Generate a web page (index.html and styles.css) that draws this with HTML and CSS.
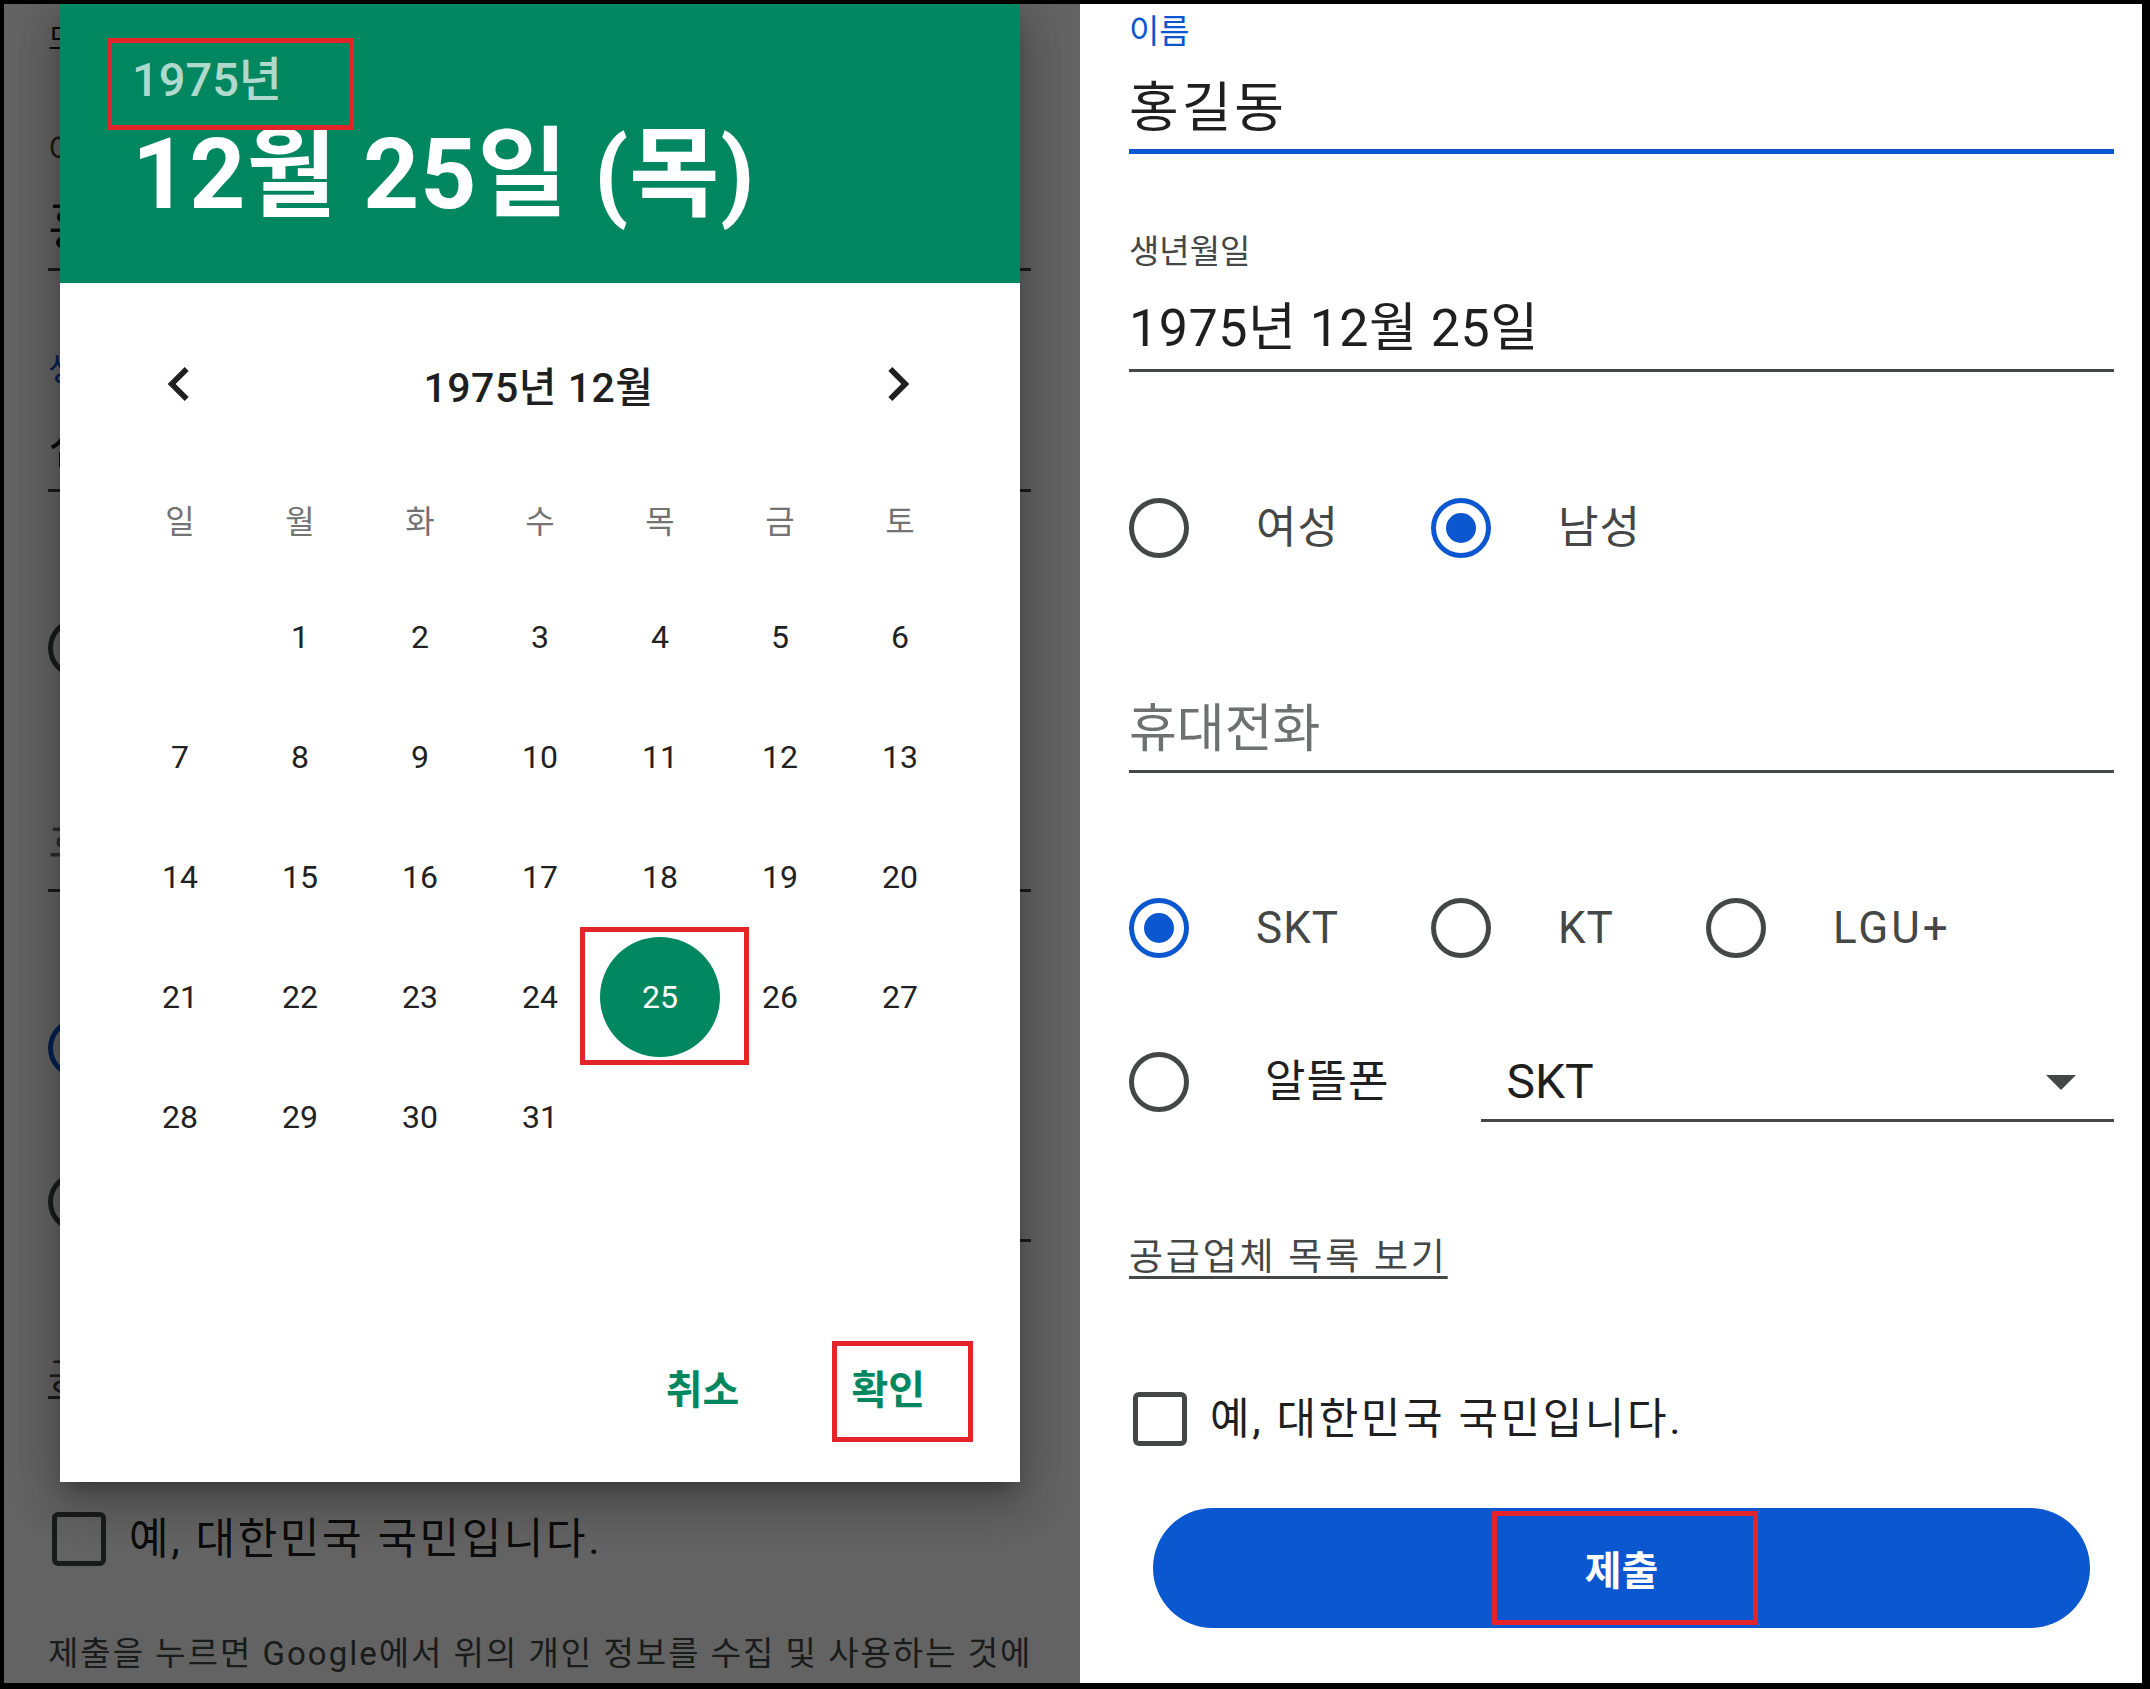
FILE: index.html
```html
<!DOCTYPE html>
<html lang="ko">
<head>
<meta charset="utf-8">
<title>날짜 선택</title>
<link rel="stylesheet" href="styles.css">
</head>
<body>
<div class="frame">
  <section class="panel panel-left">
    <div class="form">
      <p class="intro">모든 항목을 입력해 주세요.</p>
      <div class="field">
        <div class="field-label">이름</div>
        <div class="field-value name-value">홍길동</div>
      </div>
      <div class="field f-date active-label">
        <div class="field-label">생년월일</div>
        <div class="field-value">선택하세요</div>
      </div>
      <div class="radio-row row-gender">
        <div class="opt"><span class="radio"></span><span class="opt-label">여성</span></div>
        <div class="opt"><span class="radio on"></span><span class="opt-label">남성</span></div>
      </div>
      <div class="field no-label f-phone">
        <div class="field-value placeholder">휴대전화</div>
      </div>
      <div class="radio-row row-carrier">
        <div class="opt"><span class="radio on"></span><span class="opt-label">SKT</span></div>
        <div class="opt"><span class="radio"></span><span class="opt-label">KT</span></div>
        <div class="opt"><span class="radio"></span><span class="opt-label lgu">LGU+</span></div>
      </div>
      <div class="row-mvno">
        <span class="radio"></span><span class="opt-label">알뜰폰</span>
        <div class="select"><span class="select-value">SKT</span><span class="caret"></span></div>
      </div>
      <a class="link">공급업체 목록 보기</a>
      <div class="check-row"><span class="checkbox"></span><span class="check-label">예, 대한민국 국민입니다.</span></div>
      <p class="disclaimer">제출을 누르면 Google에서 위의 개인 정보를 수집 및 사용하는 것에</p>
    </div>

    <div class="scrim"></div>

    <div class="dialog">
      <div class="dlg-head">
        <div class="dlg-year">1975년</div>
        <div class="dlg-date">12월 25일 (목)</div>
      </div>
      <div class="cal-nav">
        <svg class="chev" viewBox="0 0 24 24"><path d="M15.41 7.41L14 6l-6 6 6 6 1.41-1.41L10.83 12z"/></svg>
        <span class="cal-title">1975년 12월</span>
        <svg class="chev" viewBox="0 0 24 24"><path d="M10 6L8.59 7.41 13.17 12l-4.58 4.59L10 18l6-6z"/></svg>
      </div>
      <div class="cal-week">
        <span class="wd">일</span><span class="wd">월</span><span class="wd">화</span><span class="wd">수</span><span class="wd">목</span><span class="wd">금</span><span class="wd">토</span>
      </div>
      <div class="cal-days">
        <span class="day"></span><span class="day">1</span><span class="day">2</span><span class="day">3</span><span class="day">4</span><span class="day">5</span><span class="day">6</span>
        <span class="day">7</span><span class="day">8</span><span class="day">9</span><span class="day">10</span><span class="day">11</span><span class="day">12</span><span class="day">13</span>
        <span class="day">14</span><span class="day">15</span><span class="day">16</span><span class="day">17</span><span class="day">18</span><span class="day">19</span><span class="day">20</span>
        <span class="day">21</span><span class="day">22</span><span class="day">23</span><span class="day">24</span><span class="day sel">25</span><span class="day">26</span><span class="day">27</span>
        <span class="day">28</span><span class="day">29</span><span class="day">30</span><span class="day">31</span>
      </div>
      <div class="dlg-actions">
        <span class="dlg-btn">취소</span>
        <span class="dlg-btn">확인</span>
      </div>
      <span class="mark mark-year"></span>
      <span class="mark mark-day"></span>
      <span class="mark mark-ok"></span>
    </div>
  </section>

  <section class="panel panel-right">
    <div class="form">
      <div class="field focused">
        <div class="field-label">이름</div>
        <div class="field-value name-value">홍길동</div>
      </div>
      <div class="field f-date">
        <div class="field-label">생년월일</div>
        <div class="field-value date-value">1975년 12월 25일</div>
      </div>
      <div class="radio-row row-gender">
        <div class="opt"><span class="radio"></span><span class="opt-label">여성</span></div>
        <div class="opt"><span class="radio on"></span><span class="opt-label">남성</span></div>
      </div>
      <div class="field no-label f-phone">
        <div class="field-value placeholder">휴대전화</div>
      </div>
      <div class="radio-row row-carrier">
        <div class="opt"><span class="radio on"></span><span class="opt-label">SKT</span></div>
        <div class="opt"><span class="radio"></span><span class="opt-label">KT</span></div>
        <div class="opt"><span class="radio"></span><span class="opt-label lgu">LGU+</span></div>
      </div>
      <div class="row-mvno">
        <span class="radio"></span><span class="opt-label">알뜰폰</span>
        <div class="select"><span class="select-value">SKT</span><span class="caret"></span></div>
      </div>
      <a class="link">공급업체 목록 보기</a>
      <div class="check-row"><span class="checkbox"></span><span class="check-label">예, 대한민국 국민입니다.</span></div>
      <div class="submit">제출</div>
    </div>
    <span class="mark mark-submit"></span>
  </section>
</div>
</body>
</html>
```

FILE: styles.css
```css
* { box-sizing: border-box; }
html, body { margin: 0; padding: 0; }
body {
  background: #000;
  font-family: Roboto, "Noto Sans CJK KR", sans-serif;
  color: #1f1f1f;
}
p { margin: 0; }

.frame {
  width: 2150px;
  height: 1689px;
  padding: 4px 8px 6px 4px;
  display: flex;
}
.panel {
  position: relative;
  height: 1679px;
  overflow: hidden;
  background: #fff;
  flex: none;
}
.panel-left { width: 1076px; padding: 15px 49px 0 44px; }
.panel-right { width: 1062px; padding: 7.5px 28px 0 49px; }

.form { display: flex; flex-direction: column; }

.intro {
  font-size: 30px;
  line-height: 40px;
  margin-bottom: 72px;
  color: #1f1f1f;
  white-space: nowrap;
}

/* text fields */
.field { border-bottom: 3px solid #444746; padding-bottom: 8px; }
.field.focused { border-bottom: 5px solid #0b57d0; }
.field.active-label { padding-bottom: 10px; }
.field-label { font-size: 33px; line-height: 40px; color: #444746; }
.field.focused .field-label,
.field.active-label .field-label { color: #0b57d0; }
.field-value {
  margin-top: 25px;
  font-size: 52px;
  line-height: 64px;
  color: #1f1f1f;
  white-space: nowrap;
}
.name-value { font-size: 54px; letter-spacing: 3px; }
.date-value { letter-spacing: 0.5px; }
.field.no-label .field-value { margin-top: 0; }
.placeholder { color: #6f7170; }
.f-date { margin-top: 78.5px; }
.f-phone { margin-top: 139.5px; }

/* radios */
.radio-row { display: flex; align-items: center; height: 60px; }
.row-gender { margin-top: 126px; }
.row-carrier { margin-top: 125.5px; }
.opt { display: flex; align-items: center; margin-right: 92px; }
.radio {
  width: 60px;
  height: 60px;
  border: 5px solid #444746;
  border-radius: 50%;
  flex: none;
}
.radio.on {
  border-color: #0b57d0;
  display: flex;
  align-items: center;
  justify-content: center;
}
.radio.on::after {
  content: "";
  width: 30px;
  height: 30px;
  border-radius: 50%;
  background: #0b57d0;
}
.opt-label {
  margin-left: 67px;
  font-size: 44px;
  line-height: 60px;
  letter-spacing: 1px;
  color: #444746;
  white-space: nowrap;
}
.opt-label.lgu { letter-spacing: 3px; }

/* mvno + select */
.row-mvno {
  display: flex;
  align-items: flex-start;
  height: 72px;
  margin-top: 92px;
}
.row-mvno .radio { margin-top: 2px; }
.row-mvno .opt-label { margin-left: 76px; line-height: 64px; color: #1f1f1f; }
.select {
  margin-left: 92px;
  flex: 1;
  height: 72px;
  display: flex;
  align-items: center;
  justify-content: space-between;
  padding: 0 38px 5px 25px;
  border-bottom: 3px solid #444746;
}
.select-value { font-size: 48px; line-height: 64px; color: #1f1f1f; }
.caret {
  width: 0;
  height: 0;
  border-left: 15.5px solid transparent;
  border-right: 15.5px solid transparent;
  border-top: 15px solid #444746;
}

.link {
  align-self: flex-start;
  margin-top: 112px;
  font-size: 37px;
  line-height: 48px;
  letter-spacing: 2.8px;
  color: #444746;
  text-decoration: underline;
  text-decoration-thickness: 3px;
  text-underline-offset: 6px;
  white-space: nowrap;
}

.check-row {
  display: flex;
  align-items: center;
  height: 54px;
  margin-top: 110px;
}
.checkbox {
  width: 54px;
  height: 54px;
  margin-left: 4px;
  border: 5px solid #444746;
  border-radius: 6px;
  flex: none;
}
.check-label {
  margin-left: 23px;
  font-size: 43px;
  line-height: 54px;
  letter-spacing: 2.6px;
  color: #1f1f1f;
  white-space: nowrap;
}

.submit {
  margin: 62px 24px 0;
  height: 120px;
  border-radius: 60px;
  background: #0b57d0;
  color: #fff;
  font-size: 40px;
  font-weight: 700;
  display: flex;
  align-items: center;
  justify-content: center;
}

.disclaimer {
  margin-top: 66px;
  font-size: 33px;
  line-height: 44px;
  letter-spacing: 2px;
  color: #444746;
  white-space: nowrap;
}

/* scrim + dialog */
.scrim {
  position: absolute;
  inset: 0;
  background: rgba(0, 0, 0, 0.61);
}
.dialog {
  position: absolute;
  left: 56px;
  top: 0;
  width: 960px;
  height: 1478px;
  background: #fff;
  box-shadow: 0 11px 15px -7px rgba(0,0,0,.25), 0 24px 38px 3px rgba(0,0,0,.16), 0 9px 46px 8px rgba(0,0,0,.14);
}
.dlg-head {
  height: 279px;
  background: #01875f;
  padding: 46px 0 0 72px;
  color: #fff;
}
.dlg-year {
  font-size: 47px;
  line-height: 60px;
  font-weight: 500;
  color: rgba(255, 255, 255, 0.7);
}
.dlg-date {
  margin-top: 10px;
  font-size: 98px;
  line-height: 110px;
  font-weight: 700;
  letter-spacing: 1px;
  white-space: nowrap;
}
.cal-nav {
  margin-top: 51px;
  height: 100px;
  display: flex;
  align-items: center;
  justify-content: space-between;
  padding: 0 88px 0 85px;
}
.chev { width: 68px; height: 68px; fill: #1f1f1f; }
.cal-title { font-size: 41px; font-weight: 500; letter-spacing: 0.5px; color: #1f1f1f; }

.cal-week, .cal-days {
  display: grid;
  grid-template-columns: repeat(7, 120px);
  padding: 0 60px;
}
.cal-week { margin-top: 48px; height: 80px; }
.wd { text-align: center; font-size: 32px; line-height: 80px; color: #737373; }
.cal-days { margin-top: 15px; grid-auto-rows: 120px; }
.day {
  display: flex;
  align-items: center;
  justify-content: center;
  font-size: 32px;
  color: #212121;
}
.day.sel { background: #01875f; color: #fff; border-radius: 50%; }

.dlg-actions {
  margin-top: 184px;
  display: flex;
  justify-content: flex-end;
  gap: 112px;
  padding-right: 95px;
}
.dlg-btn { font-size: 40px; line-height: 60px; font-weight: 700; color: #01875f; }

/* red annotation frames */
.mark { position: absolute; border: 5px solid #e3242b; }
.mark-year { left: 47px; top: 34px; width: 247px; height: 92px; }
.mark-day { left: 520px; top: 923px; width: 169px; height: 138px; }
.mark-ok { left: 772px; top: 1337px; width: 141px; height: 101px; }
.mark-submit { left: 412px; top: 1507px; width: 266px; height: 114px; }
```
